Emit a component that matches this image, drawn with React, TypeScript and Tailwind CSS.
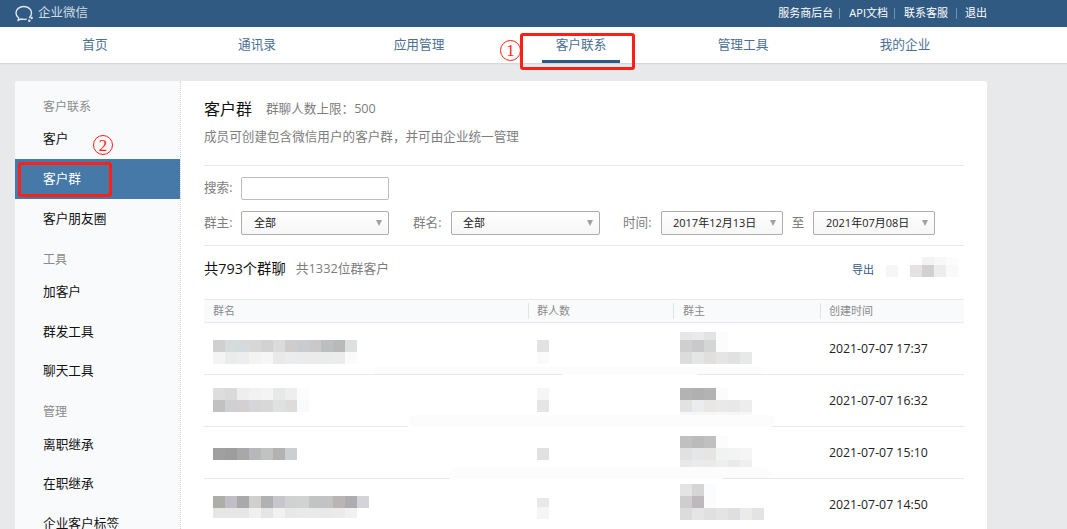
import React from "react";

const FONT = "font-['Open_Sans','Noto_Sans_CJK_SC',sans-serif]";

type BlurRow = { cells: string[]; h?: string };

// mosaic blocks that hide names in the screenshot
function Mosaic({ rows }: { rows: BlurRow[] }) {
  return (
    <div className="flex flex-col">
      {rows.map((row, i) => (
        <div key={i} className={`flex ${row.h ?? "h-[12px]"}`}>
          {row.cells.map((c, j) => (
            <span key={j} className={`w-[12px] h-full ${c}`} />
          ))}
        </div>
      ))}
    </div>
  );
}

const navItems = ["首页", "通讯录", "应用管理", "客户联系", "管理工具", "我的企业"];

const rowsData: {
  name: BlurRow[];
  count: BlurRow[];
  owner: BlurRow[];
  nameCls: string;
  countCls: string;
  ownerCls: string;
  time: string;
  line: string;
  smudges: string[];
}[] = [
  {
    nameCls: "pt-[6px]",
    countCls: "pt-[6px]",
    ownerCls: "pb-[2px]",
    name: [
      { cells: ["bg-[#d0d0d0]", "bg-[#d6dbdb]", "bg-[#d6dadd]", "bg-[#d6d7d6]", "bg-[#d3d2d0]", "bg-[#d9dbdd]", "bg-[#cecccc]", "bg-[#c8ccd0]", "bg-[#cbc8c9]", "bg-[#bcbfc1]", "bg-[#b8baba]", "bg-[#dce0e0]"] },
      { cells: ["bg-[#f4f4f4]", "bg-[#eaecec]", "bg-[#ebedef]", "bg-[#f3f3f3]", "bg-[#f6f6f6]", "bg-[#e9e9ea]", "bg-[#ebecee]", "bg-[#eaebec]", "bg-[#ebebeb]", "bg-[#eaebeb]", "bg-[#ebecec]", "bg-[#fbfbfb]"] },
    ],
    count: [{ cells: ["bg-[#e2e2e3]"] }, { cells: ["bg-[#fafafa]"] }],
    owner: [
      { h: "h-[8px]", cells: ["bg-[#e6e6e6]", "bg-[#eaeaea]", "bg-[#e3e3e3]", "bg-[#fbfcfd]"] },
      { cells: ["bg-[#cfcfcf]", "bg-[#c9c9cb]", "bg-[#d4d6d5]", "bg-[#fbfcfd]"] },
      { cells: ["bg-[#dcdcdc]", "bg-[#e4e6e5]", "bg-[#e0dfdd]", "bg-[#e5e5e5]", "bg-[#e0e1e3]", "bg-[#e7e9e8]"] },
    ],
    time: "2021-07-07 17:37",
    line: "bg-[linear-gradient(to_right,#e6e8eb_358px,transparent_358px,transparent_493px,#e6e8eb_493px)]",
    smudges: ["left-[170px] top-[44px] w-[390px] h-[8px]"],
  },
  {
    nameCls: "pb-[2px]",
    countCls: "pb-[2px]",
    ownerCls: "pt-[10px]",
    name: [
      { cells: ["bg-[#dcddde]", "bg-[#dadadb]", "bg-[#eeeeee]", "bg-[#f2f2f2]", "bg-[#f4f4f4]", "bg-[#e7e9e9]", "bg-[#eeeeee]", "bg-[#fbfcfe]"] },
      { cells: ["bg-[#c0c2c1]", "bg-[#cfd0d2]", "bg-[#d4cfd1]", "bg-[#d6d6da]", "bg-[#d8d8d8]", "bg-[#dde1e2]", "bg-[#dddcda]", "bg-[#f8fafd]"] },
    ],
    count: [{ cells: ["bg-[#f5f5f7]"] }, { cells: ["bg-[#e5e5e7]"] }],
    owner: [
      { cells: ["bg-[#b4b3b2]", "bg-[#b0afb2]", "bg-[#b4b3b3]", "bg-[#fafbfd]"] },
      { cells: ["bg-[#e2e2e2]", "bg-[#ebecef]", "bg-[#e8e7e5]", "bg-[#e9e9e9]", "bg-[#e7e8ea]", "bg-[#ecedec]"] },
      { cells: ["bg-[#f7f7f7]", "bg-[#f6f6f6]", "bg-[#f6f6f6]", "bg-[#f6f7f7]", "bg-[#f5f6f6]", "bg-[#f7f7f7]"] },
    ],
    time: "2021-07-07 16:32",
    line: "bg-[linear-gradient(to_right,#e6e8eb_204px,transparent_204px,transparent_568px,#e6e8eb_568px)]",
    smudges: ["left-[204px] top-[40px] w-[368px] h-[12px]"],
  },
  {
    nameCls: "pt-[2px]",
    countCls: "pt-[2px]",
    ownerCls: "pt-[6px]",
    name: [
      { cells: ["bg-[#a0a09e]", "bg-[#9e9c9e]", "bg-[#a7a9a8]", "bg-[#b8b7bc]", "bg-[#bfc3c1]", "bg-[#b2b2b2]", "bg-[#cacfd2]"] },
    ],
    count: [{ cells: ["bg-[#e1e1e1]"] }],
    owner: [
      { h: "h-[12px]", cells: ["bg-[#c0c0c0]", "bg-[#bcbbbc]", "bg-[#c0c0c1]", "bg-[#fbfcfd]"] },
      { cells: ["bg-[#e2e1e1]", "bg-[#e4e6e8]", "bg-[#e6e5e3]", "bg-[#f1f2f2]", "bg-[#f2f3f3]", "bg-[#f5f5f5]"] },
      { h: "h-[8px]", cells: ["bg-[#e8e8e8]", "bg-[#ebebec]", "bg-[#ebeae9]", "bg-[#eeeeee]", "bg-[#e9eaea]", "bg-[#eeefee]"] },
      { h: "h-[8px]", cells: ["bg-[#f0f0ee]", "bg-[#f2f2f0]", "bg-[#f0f0ee]"] },
    ],
    time: "2021-07-07 15:10",
    line: "bg-[linear-gradient(to_right,#e6e8eb_246px,transparent_246px,transparent_519px,#e6e8eb_519px)]",
    smudges: ["left-[246px] top-[40px] w-[320px] h-[12px]"],
  },
  {
    nameCls: "pt-[4px]",
    countCls: "pt-[6px]",
    ownerCls: "pb-[6px]",
    name: [
      { cells: ["bg-[#aeaea8]", "bg-[#c0bec4]", "bg-[#a9a9ab]", "bg-[#d0cfcd]", "bg-[#b0b1b3]", "bg-[#c8c6cd]", "bg-[#d0d1d3]", "bg-[#d1d3d2]", "bg-[#c3c3c6]", "bg-[#c2c3c5]", "bg-[#bab5b5]", "bg-[#aeacb1]", "bg-[#d3d3d9]"] },
      { h: "h-[10px]", cells: ["bg-[#e6e6e6]", "bg-[#e6e6e7]", "bg-[#e5e7e6]", "bg-[#f0f0f0]", "bg-[#e3e5e6]", "bg-[#f2f0f2]", "bg-[#e8e8ea]", "bg-[#eaebe9]", "bg-[#e9eaea]", "bg-[#e9e9e9]", "bg-[#ecebea]", "bg-[#f2f1f1]"] },
    ],
    count: [{ h: "h-[9px]", cells: ["bg-[#e8e8e8]"] }, { cells: ["bg-[#f5f5f5]"] }],
    owner: [
      { cells: ["bg-[#e4e4e4]", "bg-[#d6d5d5]", "bg-[#fafcfe]"] },
      { cells: ["bg-[#cfcdd0]", "bg-[#bdb9bd]", "bg-[#fafcfe]"] },
      { cells: ["bg-[#dcdcdc]", "bg-[#e4e6e6]", "bg-[#e1e0de]", "bg-[#e4e4e4]", "bg-[#dfdfe2]", "bg-[#ebebe9]", "bg-[#e4e2e4]"] },
    ],
    time: "2021-07-07 14:50",
    line: "",
    smudges: [],
  },
];

function Sidebar() {
  const title = "h-[34px] pt-[9px] pl-[28px] flex items-center text-[12px] text-[#8a8a8a]";
  const item = "h-[39.5px] pl-[28px] flex items-center text-[12.7px] text-[#111]";
  return (
    <aside className="w-[166px] shrink-0 bg-[#f9fafc] border-r border-dotted border-[#cfd2d8]">
      <div className="h-[38px] pt-[14px] pl-[28px] flex items-center text-[12px] text-[#8a8a8a]">客户联系</div>
      <div className={item}>客户</div>
      <div className="h-[40px] pl-[28px] flex items-center text-[12.7px] text-white bg-[#4679a8]">客户群</div>
      <div className={item}>客户朋友圈</div>
      <div className={title}>工具</div>
      <div className={item}>加客户</div>
      <div className={item}>群发工具</div>
      <div className={item}>聊天工具</div>
      <div className={title}>管理</div>
      <div className={item}>离职继承</div>
      <div className={item}>在职继承</div>
      <div className={item}>企业客户标签</div>
    </aside>
  );
}

function Select({ value, width, pad }: { value: string; width: string; pad: string }) {
  return (
    <div className={`${width} ${pad} h-[24px] flex items-center justify-between pr-[6px] border border-[#adadad] rounded-[2px] bg-gradient-to-b from-white to-[#f6f6f6] text-[11px] text-[#222]`}>
      <span>{value}</span>
      <svg width="6" height="6" viewBox="0 0 6 6">
        <path d="M0 0h6L3 6z" fill="#a0a0a0" />
      </svg>
    </div>
  );
}

export default function App() {
  return (
    <div className={`relative h-screen overflow-hidden bg-[#e8e9eb] ${FONT}`}>
      {/* Top bar */}
      <header className="h-[27px] bg-[#315a82] flex items-center justify-between pl-[15px] pr-[80px]">
        <div className="flex items-center gap-[3px] text-[#d3dce5]">
          <svg width="20" height="18" viewBox="0 0 20 18" fill="none" stroke="#dfe6ed" strokeWidth="1.4">
            <path d="M14.5 12.5C16 11.300 16.500 9.800 16.500 8 16.500 4.400 13.300 1.500 8.800 1.500S1 4.400 1 8c0 2 1 3.800 2.700 5l-.5 2.300 2.800-1.300c.9.200 1.800.4 2.800.4 1 0 1.700-.1 2.500-.3" strokeLinecap="round" />
            <circle cx="16.700" cy="13" r="1.200" fill="#dfe6ed" stroke="none" />
            <circle cx="14.300" cy="15.700" r="1.200" fill="#dfe6ed" stroke="none" />
          </svg>
          <span className="text-[12.500px]">企业微信</span>
        </div>
        <nav className="flex items-center text-[11px] text-white">
          <span>服务商后台</span>
          <span className="mx-[5.500px] w-px h-[11px] bg-[#6f93b5]" />
          <span className="ml-[4px]">API文档</span>
          <span className="mx-[6px] w-px h-[11px] bg-[#6f93b5]" />
          <span className="ml-[3px]">联系客服</span>
          <span className="mx-[8px] w-px h-[11px] bg-[#6f93b5]" />
          <span>退出</span>
        </nav>
      </header>

      {/* Main nav */}
      <div className="h-[36px] bg-white shadow-[0_1px_1px_#d6d7d9] pl-[14px]">
        <div className="grid grid-cols-6 w-[972px] h-full">
          {navItems.map((name) => (
            <div key={name} className="relative flex items-center justify-center pb-[1px] text-[12.700px] text-[#4b7093]">
              {name}
              {name === "客户联系" && (
                <span className="absolute bottom-0 left-[42px] w-[78px] h-[3px] bg-[#315a82]" />
              )}
            </div>
          ))}
        </div>
      </div>

      {/* Card */}
      <div className="mt-[18px] ml-[15px] w-[972px] h-[460px] flex bg-white rounded-[3px] overflow-hidden">
        <Sidebar />
        <main className="flex-1 pl-[23px] pr-[23px]">
          <div className="h-[40px] pt-[16px] flex items-center gap-[14px]">
            <span className="text-[16px] text-[#111]">客户群</span>
            <span className="text-[12.600px] text-[#7d7d7d]">群聊人数上限：500</span>
          </div>
          <p className="h-[28px] mt-[2px] flex items-center text-[12.600px] text-[#7d7d7d]">成员可创建包含微信用户的客户群，并可由企业统一管理</p>

          <div className="mt-[14px] border-t border-[#e6e6e6] pt-[11px] pb-[10px]">
            <div className="flex items-center h-[23px] text-[12.600px] text-[#7d7d7d]">
              <span className="w-[37px]">搜索:</span>
              <div className="w-[148px] h-[23px] border border-[#bdbdbd] rounded-[2px] bg-white" />
            </div>
            <div className="mt-[11px] flex items-center text-[12.600px] text-[#7d7d7d]">
              <span className="w-[37px]">群主:</span>
              <Select value="全部" width="w-[148px]" pad="pl-[12px]" />
              <span className="ml-[24px] w-[38px]">群名:</span>
              <Select value="全部" width="w-[149px]" pad="pl-[11px]" />
              <span className="ml-[23px] w-[38px]">时间:</span>
              <Select value="2017年12月13日" width="w-[122px]" pad="pl-[11px]" />
              <span className="w-[30px] text-center">至</span>
              <Select value="2021年07月08日" width="w-[122px]" pad="pl-[12px]" />
            </div>
          </div>

          <div className="h-[54px] border-t border-[#e6e6e6] flex items-center justify-between pb-[8px]">
            <div className="flex items-center gap-[10px]">
              <span className="text-[14.300px] text-[#111]">共793个群聊</span>
              <span className="text-[12.800px] text-[#7d7d7d]">共1332位群客户</span>
            </div>
            <div className="flex items-center pr-[6px]">
              <span className="mt-[4px] text-[11px] text-[#315a82]">导出</span>
              <div className="ml-[12px] w-[12px] h-[12px] mt-[4px] bg-[#f7f6f7]" />
              <div className="ml-[12px] mt-[-4px]">
                <Mosaic
                  rows={[
                    { h: "h-[8px]", cells: ["bg-white", "bg-[#f3f3f3]", "bg-[#f8f8f8]", "bg-[#fcfcfc]"] },
                    { cells: ["bg-[#e5e1e4]", "bg-[#d0d0d0]", "bg-[#ececec]", "bg-[#f9f9f9]"] },
                  ]}
                />
              </div>
            </div>
          </div>

          {/* Table */}
          <div className="grid grid-cols-[324px_145px_147px_1fr] h-[24px] items-center bg-[#f9fafc] border-y border-[#e6e8eb] text-[11px] text-[#8a8a8a]">
            <span className="pl-[9px]">群名</span>
            <span className="pl-[8px] border-l border-[#e3e3e3] h-[16px] flex items-center">群人数</span>
            <span className="pl-[9px] border-l border-[#e3e3e3] h-[16px] flex items-center">群主</span>
            <span className="pl-[8px] border-l border-[#e3e3e3] h-[16px] flex items-center">创建时间</span>
          </div>
          {rowsData.map((row) => (
            <div key={row.time} className="relative grid grid-cols-[324px_145px_147px_1fr] h-[52px] items-center">
              <div className={`pl-[9px] ${row.nameCls}`}><Mosaic rows={row.name} /></div>
              <div className={`pl-[9px] ${row.countCls}`}><Mosaic rows={row.count} /></div>
              <div className={`pl-[7px] ${row.ownerCls}`}><Mosaic rows={row.owner} /></div>
              <div className="pl-[9px] text-[12.300px] text-[#222]">{row.time}</div>
              {row.smudges.map((s) => (
                <span key={s} className={`absolute rounded-full bg-[#fcfcfc] ${s}`} />
              ))}
              {row.line && <span className={`absolute left-0 right-0 bottom-0 h-px ${row.line}`} />}
            </div>
          ))}
        </main>
      </div>

      {/* Red annotations drawn over the page */}
      <span className="absolute left-[520px] top-[33px] w-[115px] h-[37px] border-[3px] border-[#fe1f17] rounded-[3px]" />
      <span className="absolute left-[18px] top-[162px] w-[94px] h-[35px] border-[3px] border-[#fe1f17] rounded-[3px]" />
      <span className="absolute left-[500px] top-[40px] w-[21px] h-[21px] rounded-full border border-[#fe1f17] flex items-center justify-center font-['Liberation_Serif',serif] text-[17px] leading-none text-[#fe1f17]">1</span>
      <span className="absolute left-[93px] top-[135px] w-[20px] h-[20px] rounded-full border border-[#fe1f17] flex items-center justify-center font-['Liberation_Serif',serif] text-[17px] leading-none text-[#fe1f17]">2</span>
    </div>
  );
}
